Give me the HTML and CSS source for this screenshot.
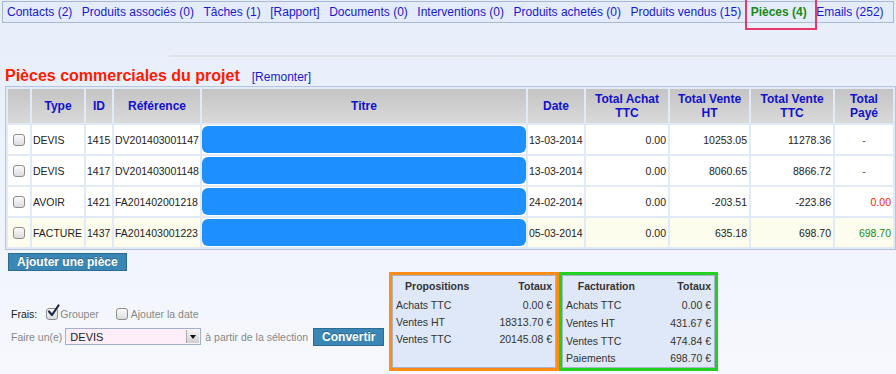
FILE: index.html
```html
<!DOCTYPE html>
<html>

<head>
  <meta charset="UTF-8">
  <meta name="viewport" content="width=device-width, initial-scale=1.0">
  <title>Pièces commerciales du projet</title>
  <link rel="stylesheet" href="styles.css">
</head>

<body>
  <div class="tabs">
    <a href="#">Contacts (2)</a>
    <a href="#">Produits associés (0)</a>
    <a href="#">Tâches (1)</a>
    <a href="#">[Rapport]</a>
    <a href="#">Documents (0)</a>
    <a href="#">Interventions (0)</a>
    <a href="#">Produits achetés (0)</a>
    <a href="#">Produits vendus (15)</a>
    <a href="#" class="active">Pièces (4)</a>
    <a href="#">Emails (252)</a>
  </div>
  <div class="rule"></div>

  <div class="title-row">
    <h2>Pièces commerciales du projet</h2>
    <a href="#">[Remonter]</a>
  </div>

  <table class="pieces">
    <colgroup>
      <col class="c-chk">
      <col class="c-type">
      <col class="c-id">
      <col class="c-ref">
      <col class="c-titre">
      <col class="c-date">
      <col class="c-achat">
      <col class="c-ht">
      <col class="c-ttc">
      <col class="c-paye">
    </colgroup>
    <thead>
      <tr>
        <th></th>
        <th>Type</th>
        <th>ID</th>
        <th>Référence</th>
        <th>Titre</th>
        <th>Date</th>
        <th>Total Achat<br>TTC</th>
        <th>Total Vente<br>HT</th>
        <th>Total Vente<br>TTC</th>
        <th>Total<br>Payé</th>
      </tr>
    </thead>
    <tbody>
      <tr>
        <td class="chk"><input type="checkbox"></td>
        <td>DEVIS</td>
        <td>1415</td>
        <td>DV201403001147</td>
        <td class="titre"><div class="masked"></div></td>
        <td>13-03-2014</td>
        <td class="num">0.00</td>
        <td class="num">10253.05</td>
        <td class="num">11278.36</td>
        <td class="none">-</td>
      </tr>
      <tr>
        <td class="chk"><input type="checkbox"></td>
        <td>DEVIS</td>
        <td>1417</td>
        <td>DV201403001148</td>
        <td class="titre"><div class="masked"></div></td>
        <td>13-03-2014</td>
        <td class="num">0.00</td>
        <td class="num">8060.65</td>
        <td class="num">8866.72</td>
        <td class="none">-</td>
      </tr>
      <tr>
        <td class="chk"><input type="checkbox"></td>
        <td>AVOIR</td>
        <td>1421</td>
        <td>FA201402001218</td>
        <td class="titre"><div class="masked"></div></td>
        <td>24-02-2014</td>
        <td class="num">0.00</td>
        <td class="num">-203.51</td>
        <td class="num">-223.86</td>
        <td class="num unpaid">0.00</td>
      </tr>
      <tr class="invoice">
        <td class="chk"><input type="checkbox"></td>
        <td>FACTURE</td>
        <td>1437</td>
        <td>FA201403001223</td>
        <td class="titre"><div class="masked"></div></td>
        <td>05-03-2014</td>
        <td class="num">0.00</td>
        <td class="num">635.18</td>
        <td class="num">698.70</td>
        <td class="num paid">698.70</td>
      </tr>
    </tbody>
  </table>

  <button class="btn add">Ajouter une pièce</button>

  <div class="bottom">
    <div class="convert">
      <div class="line">
        <span class="label">Frais:</span>
        <span class="tick">
          <input type="checkbox" checked>
          <svg viewBox="0 0 14 14" width="14" height="14">
            <path d="M3 7.5 L6 11 L12.5 1.5" fill="none" stroke="#1d2b48" stroke-width="2.2" stroke-linecap="round" stroke-linejoin="round" />
          </svg>
        </span>
        <span class="muted">Grouper</span>
        <input type="checkbox" class="gap">
        <span class="muted">Ajouter la date</span>
      </div>
      <div class="line">
        <span class="muted">Faire un(e)</span>
        <span class="select">
          <select>
            <option>DEVIS</option>
            <option>FACTURE</option>
            <option>AVOIR</option>
          </select>
          <span class="arrow"></span>
        </span>
        <span class="muted">à partir de la sélection</span>
        <button class="btn">Convertir</button>
      </div>
    </div>

    <div class="totals orange">
      <table>
        <tr>
          <th class="head">Propositions</th>
          <th class="num">Totaux</th>
        </tr>
        <tr>
          <td>Achats TTC</td>
          <td class="num">0.00 €</td>
        </tr>
        <tr>
          <td>Ventes HT</td>
          <td class="num">18313.70 €</td>
        </tr>
        <tr>
          <td>Ventes TTC</td>
          <td class="num">20145.08 €</td>
        </tr>
        <tr class="filler">
          <td></td>
          <td></td>
        </tr>
      </table>
    </div>

    <div class="totals green">
      <table>
        <tr>
          <th class="head">Facturation</th>
          <th class="num">Totaux</th>
        </tr>
        <tr>
          <td>Achats TTC</td>
          <td class="num">0.00 €</td>
        </tr>
        <tr>
          <td>Ventes HT</td>
          <td class="num">431.67 €</td>
        </tr>
        <tr>
          <td>Ventes TTC</td>
          <td class="num">474.84 €</td>
        </tr>
        <tr>
          <td>Paiements</td>
          <td class="num">698.70 €</td>
        </tr>
      </table>
    </div>
  </div>
</body>

</html>
```

FILE: styles.css
```css
html {
  font-family: "Liberation Sans", Arial, sans-serif;
  background: linear-gradient(#e7eefa, #f6f8fd);
  min-height: 100%;
}

body {
  margin: 0;
  font-size: 10.5px;
  color: #222;
}

a {
  color: #1818d4;
  text-decoration: none;
}

/* onglets du projet */
.tabs {
  display: flex;
  align-items: center;
  margin: 1px 2px 0;
  height: 20px;
  padding-left: 4px;
  border: 1px solid #a9b8d5;
  background: #e4ecfb;
  font-size: 12px;
}

.tabs a {
  margin-right: 9.5px;
  white-space: nowrap;
}

.tabs a.active {
  position: relative;
  color: #188a18;
  font-weight: bold;
}

.tabs a.active::after {
  content: "";
  position: absolute;
  left: -6px;
  right: -10px;
  top: -10px;
  bottom: -11px;
  border: 2px solid #e8386b;
}

.rule {
  margin: 32px 0 0 169px;
  height: 2px;
  background: #e0e3e9;
}

.title-row {
  display: flex;
  align-items: baseline;
  height: 20px;
  margin: 9px 0 0 5px;
}

.title-row h2 {
  margin: 0 12px 0 0;
  font-size: 16px;
  line-height: 20px;
  color: #ff1a00;
}

.title-row a {
  font-size: 12px;
}

/* tableau des pièces */
.pieces {
  table-layout: fixed;
  width: 891px;
  margin-left: 5px;
  border: 1px solid #b5c5de;
  border-spacing: 2px;
  background: #e2eaf8;
}

.c-chk { width: 22px; }
.c-type { width: 52px; }
.c-id { width: 26px; }
.c-ref { width: 86px; }
.c-titre { width: 324px; }
.c-date { width: 56px; }
.c-achat { width: 82px; }
.c-ht { width: 79px; }
.c-ttc { width: 82px; }
.c-paye { width: 58px; }

.pieces th {
  height: 34px;
  padding: 0;
  background: linear-gradient(#c4c4c4, #d9d9d9);
  color: #1111cc;
  font-size: 12px;
  line-height: 14px;
}

.pieces td {
  height: 29px;
  padding: 0 1px;
  background: white;
  white-space: nowrap;
  overflow: hidden;
}

.pieces tr.invoice td {
  background: #fdfdee;
}

.pieces td.chk {
  text-align: center;
}

.pieces td.titre {
  padding: 0;
}

.masked {
  height: 27px;
  border-radius: 6px;
  background: #1e8ffe;
}

.pieces td.num {
  text-align: right;
  padding-right: 2px;
}

.pieces td.none {
  text-align: center;
  color: #555;
}

.pieces td.unpaid {
  color: #ff1a00;
}

.pieces td.paid {
  color: #188a18;
}

input[type="checkbox"] {
  appearance: none;
  width: 12px;
  height: 12px;
  margin: 0;
  vertical-align: middle;
  border: 1px solid #8d8d8d;
  border-radius: 3px;
  background: linear-gradient(#fbfbfb, #dcdcdc);
}

/* boutons */
.btn {
  height: 18px;
  padding: 0 8px;
  border: 1px solid #2c6b92;
  background: #3a87b6;
  color: white;
  font-family: inherit;
  font-size: 12px;
  font-weight: bold;
  white-space: nowrap;
  text-shadow: 0 -1px 0 rgba(0, 0, 0, 0.3);
}

.btn.add {
  display: block;
  margin: 3px 0 0 8px;
}

/* conversion et totaux */
.bottom {
  display: flex;
  align-items: flex-start;
  margin-top: 1px;
}

.convert {
  flex: none;
  width: 378px;
  padding: 33px 0 0 11px;
}

.line {
  display: flex;
  align-items: center;
  height: 17px;
  margin-bottom: 6px;
  white-space: nowrap;
}

.line .label {
  margin-right: 9px;
}

.muted {
  color: #888;
}

.tick {
  position: relative;
  display: flex;
  margin-right: 2px;
}

.tick svg {
  position: absolute;
  left: 0;
  top: -4px;
}

input.gap {
  margin: 0 3px 0 17px;
}

.select {
  position: relative;
  display: flex;
  margin: 0 4px 0 3px;
}

.select select {
  appearance: none;
  width: 136px;
  height: 17px;
  padding: 0 4px;
  border: 1px solid #a2b0cc;
  border-radius: 0;
  background: #fdeefa;
  font-family: inherit;
  font-size: 11px;
  color: #222;
}

.select .arrow {
  position: absolute;
  right: 2px;
  top: 2px;
  width: 12px;
  height: 13px;
  background: linear-gradient(#f4f4f4, #cfcfcf);
  border-left: 1px solid #aaa;
}

.select .arrow::after {
  content: "";
  position: absolute;
  left: 3px;
  top: 5px;
  border-left: 3px solid transparent;
  border-right: 3px solid transparent;
  border-top: 4px solid #111;
}

.line .btn {
  margin-left: 5px;
}

.totals {
  flex: none;
  box-sizing: border-box;
  height: 99px;
  border: 3px solid;
}

.totals.orange {
  width: 170px;
  border-color: #ff8c17;
}

.totals.green {
  width: 159px;
  border-color: #22d022;
}

.totals table {
  width: 100%;
  height: 100%;
  border: 1px solid #a8b4ca;
  border-collapse: collapse;
  background: #dfe8f8;
  color: #333;
}

.totals th,
.totals td {
  height: 17px;
  padding: 0 3px;
  white-space: nowrap;
}

.totals th {
  height: 20px;
}

.totals th.head {
  text-align: center;
}

.totals .num {
  text-align: right;
}

.totals tr.filler td {
  height: auto;
}
```
